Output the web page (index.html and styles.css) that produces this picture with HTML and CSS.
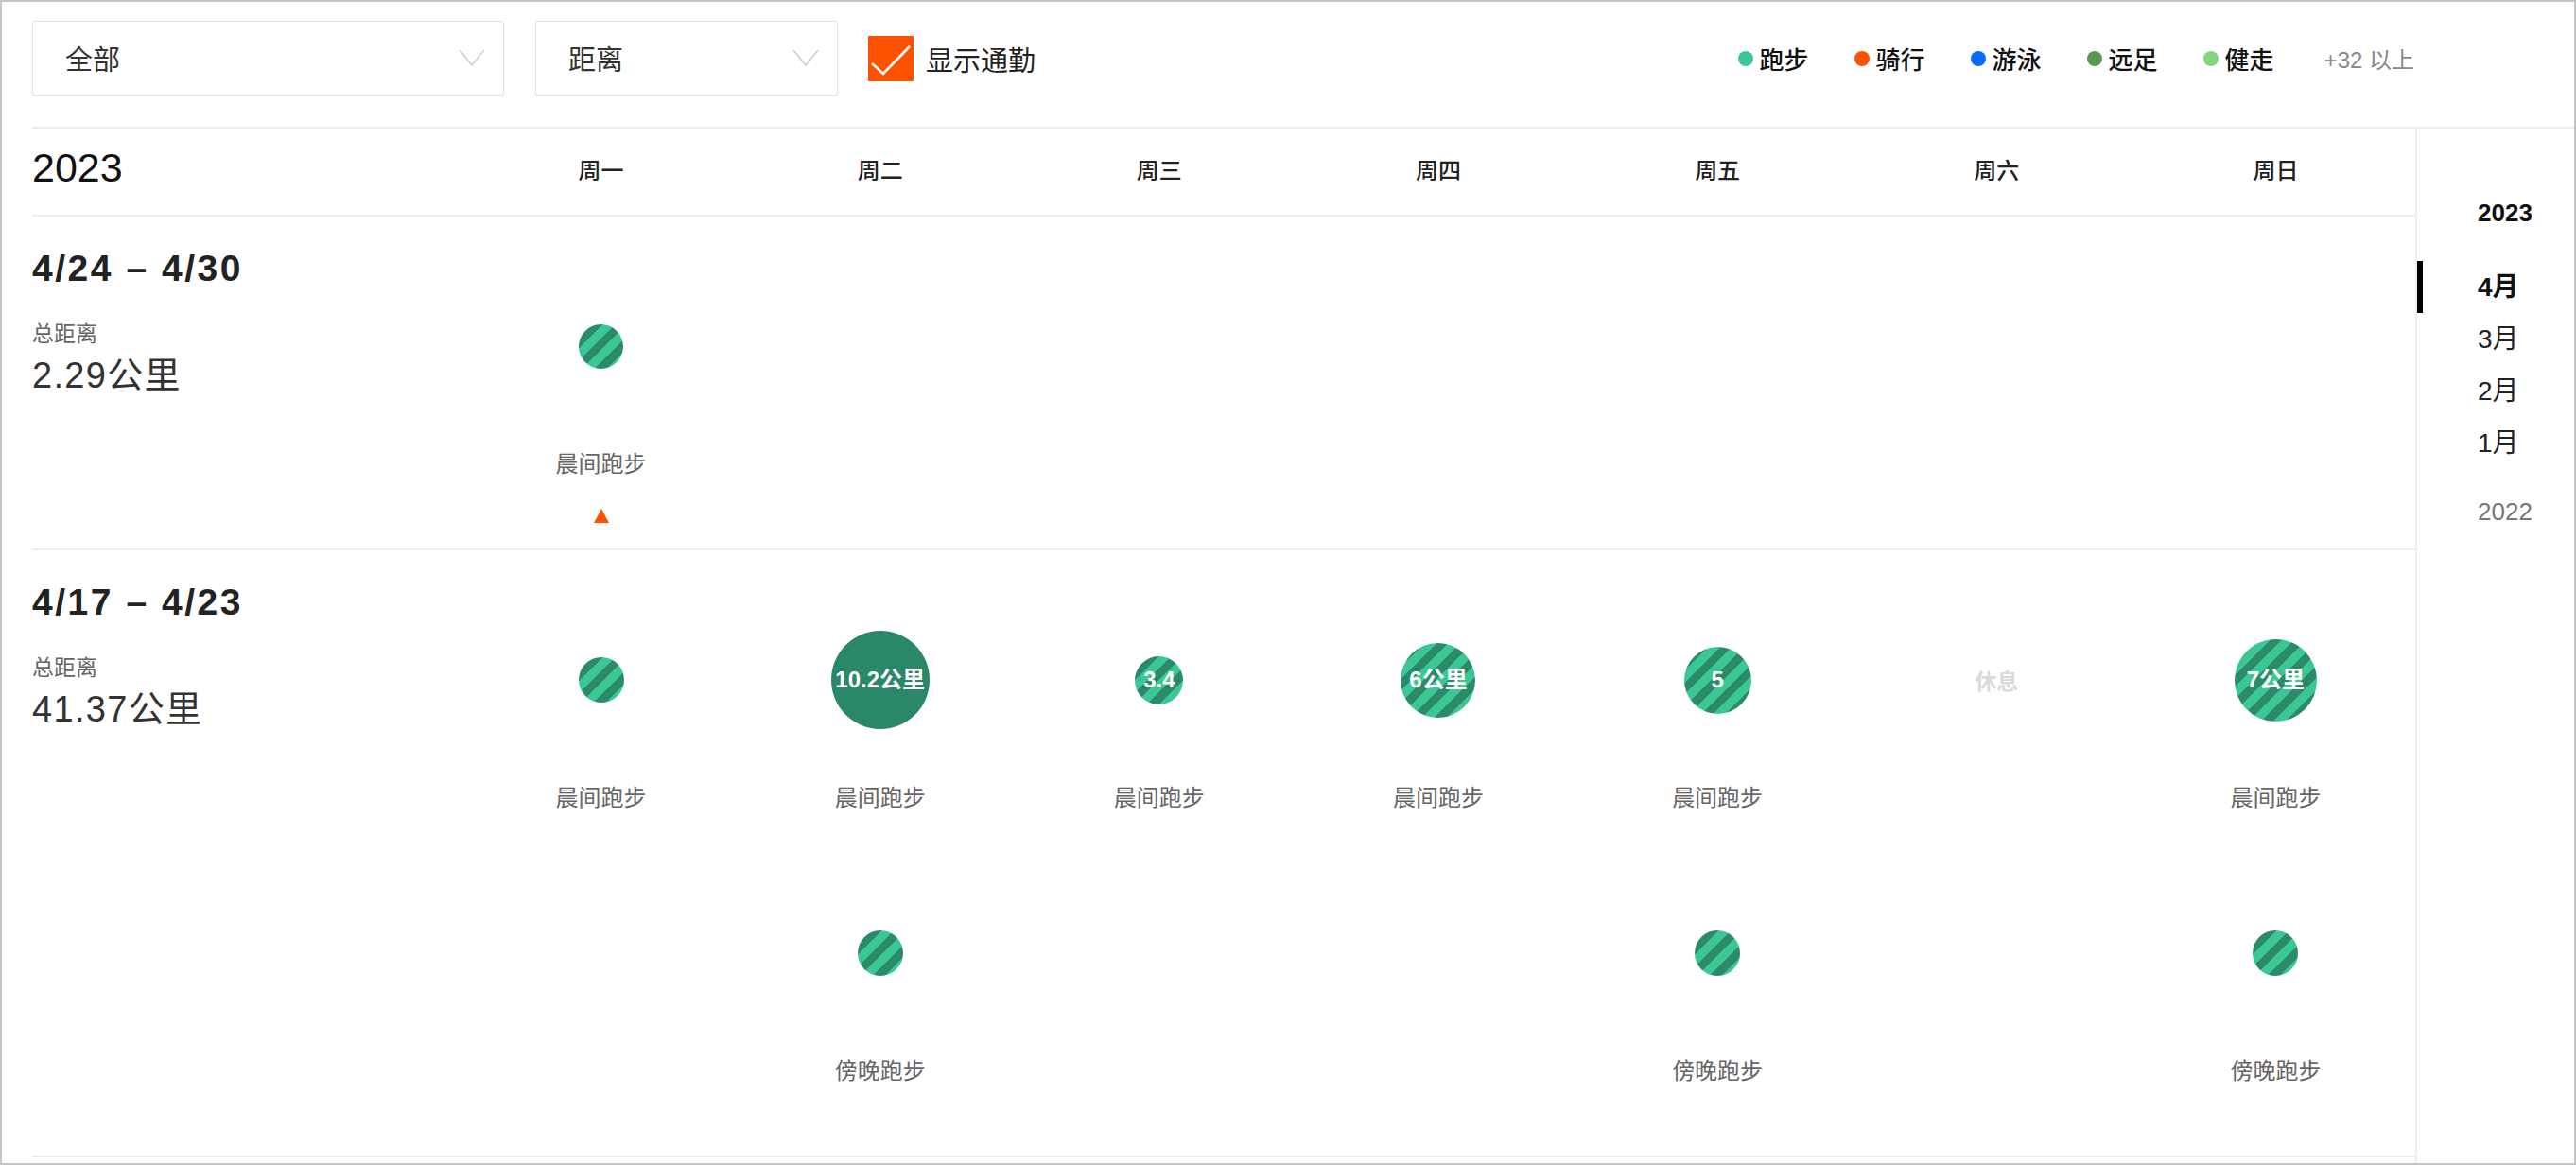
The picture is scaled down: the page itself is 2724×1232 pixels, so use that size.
FILE: index.html
```html
<!DOCTYPE html>
<html lang="zh-CN">
<head>
<meta charset="utf-8">
<title>训练日历</title>
<link rel="stylesheet" href="styles.css">
</head>
<body>
<div class="page">
  <header class="toolbar">
    <div class="select select-type">
      <span class="select-text">全部</span>
      <svg class="chevron" viewBox="0 0 28 18" width="28" height="18"><polyline points="1,1 14,17 27,1" fill="none" stroke="#cfcfcf" stroke-width="1.6"/></svg>
    </div>
    <div class="select select-metric">
      <span class="select-text">距离</span>
      <svg class="chevron" viewBox="0 0 28 18" width="28" height="18"><polyline points="1,1 14,17 27,1" fill="none" stroke="#cfcfcf" stroke-width="1.6"/></svg>
    </div>
    <label class="commute">
      <span class="checkbox"><svg viewBox="0 0 48 48" width="48" height="48"><polyline points="4,29 16,40 44,11" fill="none" stroke="#fff" stroke-width="2.6"/></svg></span>
      <span class="commute-text">显示通勤</span>
    </label>
    <ul class="legend">
      <li class="legend-item"><span class="dot dot-run"></span>跑步</li>
      <li class="legend-item"><span class="dot dot-ride"></span>骑行</li>
      <li class="legend-item"><span class="dot dot-swim"></span>游泳</li>
      <li class="legend-item"><span class="dot dot-hike"></span>远足</li>
      <li class="legend-item"><span class="dot dot-walk"></span>健走</li>
      <li class="legend-more">+32 以上</li>
    </ul>
  </header>

  <div class="main">
    <div class="calendar">
      <div class="cal-row cal-head">
        <div class="head-year">2023</div>
        <div class="head-day">周一</div>
        <div class="head-day">周二</div>
        <div class="head-day">周三</div>
        <div class="head-day">周四</div>
        <div class="head-day">周五</div>
        <div class="head-day">周六</div>
        <div class="head-day">周日</div>
      </div>

      <section class="cal-row week">
        <div class="week-info">
          <div class="week-title">4/24 – 4/30</div>
          <div class="week-label">总距离</div>
          <div class="week-value">2.29公里</div>
        </div>
        <div class="day">
          <div class="act">
            <div class="slot"><span class="bubble striped" style="width:47px;height:47px"></span></div>
            <div class="act-label">晨间跑步</div>
          </div>
          <span class="marker"></span>
        </div>
        <div class="day"></div>
        <div class="day"></div>
        <div class="day"></div>
        <div class="day"></div>
        <div class="day"></div>
        <div class="day"></div>
      </section>

      <section class="cal-row week">
        <div class="week-info">
          <div class="week-title">4/17 – 4/23</div>
          <div class="week-label">总距离</div>
          <div class="week-value">41.37公里</div>
        </div>
        <div class="day">
          <div class="act">
            <div class="slot"><span class="bubble striped" style="width:48px;height:48px"></span></div>
            <div class="act-label">晨间跑步</div>
          </div>
        </div>
        <div class="day">
          <div class="act">
            <div class="slot"><span class="bubble solid" style="width:104px;height:104px">10.2公里</span></div>
            <div class="act-label">晨间跑步</div>
          </div>
          <div class="act">
            <div class="slot"><span class="bubble striped" style="width:48px;height:48px"></span></div>
            <div class="act-label">傍晚跑步</div>
          </div>
        </div>
        <div class="day">
          <div class="act">
            <div class="slot"><span class="bubble striped" style="width:51px;height:51px">3.4</span></div>
            <div class="act-label">晨间跑步</div>
          </div>
        </div>
        <div class="day">
          <div class="act">
            <div class="slot"><span class="bubble striped" style="width:79px;height:79px">6公里</span></div>
            <div class="act-label">晨间跑步</div>
          </div>
        </div>
        <div class="day">
          <div class="act">
            <div class="slot"><span class="bubble striped" style="width:71px;height:71px">5</span></div>
            <div class="act-label">晨间跑步</div>
          </div>
          <div class="act">
            <div class="slot"><span class="bubble striped" style="width:48px;height:48px"></span></div>
            <div class="act-label">傍晚跑步</div>
          </div>
        </div>
        <div class="day">
          <div class="act">
            <div class="slot"><span class="rest">休息</span></div>
          </div>
        </div>
        <div class="day">
          <div class="act">
            <div class="slot"><span class="bubble striped" style="width:87px;height:87px">7公里</span></div>
            <div class="act-label">晨间跑步</div>
          </div>
          <div class="act">
            <div class="slot"><span class="bubble striped" style="width:48px;height:48px"></span></div>
            <div class="act-label">傍晚跑步</div>
          </div>
        </div>
      </section>
    </div>

    <aside class="sidebar">
      <div class="side-year">2023</div>
      <ul class="months">
        <li class="month active">4月</li>
        <li class="month">3月</li>
        <li class="month">2月</li>
        <li class="month">1月</li>
      </ul>
      <div class="side-year-old">2022</div>
    </aside>
  </div>
</div>
</body>
</html>
```

FILE: styles.css
```css
* { box-sizing: border-box; }

html, body {
  margin: 0;
  padding: 0;
  background: #fff;
}

body {
  font-family: "Liberation Sans", "Noto Sans CJK SC", sans-serif;
  color: #222;
}

ul { list-style: none; margin: 0; padding: 0; }

.page {
  width: 2724px;
  height: 1232px;
  border: 2px solid #c4c4c4;
  overflow: hidden;
  background: #fff;
}

/* ---------- toolbar ---------- */
.toolbar {
  display: flex;
  align-items: center;
  height: 79px;
  margin: 20px 0 33px;
  padding: 0 169px 0 32px;
}

.select {
  display: flex;
  align-items: center;
  justify-content: space-between;
  height: 79px;
  padding: 0 19px 2px 34px;
  border: 1px solid #e2e2e2;
  border-radius: 3px;
  box-shadow: 0 1px 2px rgba(0, 0, 0, 0.08);
  background: #fff;
}

.select-type { width: 499px; }
.select-metric { width: 320px; margin-left: 33px; }

.select-text {
  font-size: 29px;
  color: #333;
}

.chevron { display: block; }

.commute {
  display: flex;
  align-items: center;
  margin-left: 32px;
}

.checkbox {
  width: 48px;
  height: 48px;
  background: #fc5200;
  display: block;
}

.checkbox svg { display: block; }

.commute-text {
  margin-left: 13px;
  font-size: 29px;
  font-weight: 400;
  color: #222;
}

.legend {
  display: flex;
  align-items: center;
  margin-left: auto;
}

.legend-item {
  display: flex;
  align-items: center;
  font-size: 26px;
  font-weight: 500;
  color: #111;
  margin-right: 48px;
}

.dot {
  width: 16px;
  height: 16px;
  border-radius: 50%;
  margin-right: 7px;
}

.dot-run { background: #3cc79a; }
.dot-ride { background: #fc5200; }
.dot-swim { background: #0a6cff; }
.dot-hike { background: #5b9950; }
.dot-walk { background: #86d37d; }

.legend-more {
  font-size: 24px;
  color: #888;
  margin-left: 5px;
}

/* ---------- main ---------- */
.main {
  display: flex;
  height: 1096px;
  margin-left: 32px;
  border-top: 2px solid #ededed;
}

.calendar {
  width: 2520px;
  flex: none;
}

.cal-row {
  display: grid;
  grid-template-columns: 454px repeat(7, 1fr);
  border-bottom: 2px solid #eeeeee;
}

.cal-head {
  height: 93px;
  align-items: center;
}

.head-year {
  font-size: 43px;
  color: #111;
  padding-bottom: 8px;
}

.head-day {
  text-align: center;
  font-size: 24px;
  font-weight: 500;
  color: #222;
  padding-bottom: 6px;
}

.week {
  padding-bottom: 62px;
}

.week-info {
  padding-top: 32px;
}

.week-title {
  font-size: 39px;
  line-height: 46px;
  font-weight: 700;
  color: #222;
  letter-spacing: 0.065em;
}

.week-label {
  margin-top: 34px;
  font-size: 23px;
  line-height: 24px;
  color: #666;
}

.week-value {
  margin-top: 10px;
  font-size: 38px;
  line-height: 44px;
  color: #333;
  letter-spacing: 0.035em;
}

.day {
  display: flex;
  flex-direction: column;
  align-items: center;
}

.act {
  height: 289px;
  display: flex;
  flex-direction: column;
  align-items: center;
}

.slot {
  margin-top: 77px;
  height: 120px;
  display: flex;
  align-items: center;
  justify-content: center;
}

.bubble {
  display: flex;
  align-items: center;
  justify-content: center;
  border-radius: 50%;
  color: #fff;
  font-size: 24px;
  font-weight: 700;
  white-space: nowrap;
  line-height: 1;
}

.bubble.solid {
  background: #2a8767;
}

.bubble.striped {
  background: repeating-linear-gradient(135deg, #3bc794 0 9px, #2b8b69 9px 18px);
}

.act-label {
  margin-top: 50px;
  font-size: 24px;
  line-height: 30px;
  color: #666;
}

.rest {
  font-size: 23px;
  font-weight: 700;
  color: #dadada;
}

.marker {
  margin-top: 20px;
  margin-bottom: -35px;
  width: 0;
  height: 0;
  border-left: 8px solid transparent;
  border-right: 8px solid transparent;
  border-bottom: 15px solid #fc5200;
}

/* ---------- sidebar ---------- */
.sidebar {
  flex: 1;
  border-left: 2px solid #efefef;
  padding-top: 71px;
}

.side-year {
  padding-left: 64px;
  font-size: 26px;
  line-height: 36px;
  font-weight: 700;
  color: #111;
}

.months {
  margin-top: 33px;
}

.month {
  height: 55px;
  line-height: 55px;
  padding-left: 64px;
  font-size: 28px;
  color: #222;
}

.month.active {
  font-weight: 700;
  color: #111;
  border-left: 6px solid #000;
  padding-left: 58px;
}

.side-year-old {
  margin-top: 27px;
  padding-left: 64px;
  font-size: 26px;
  line-height: 36px;
  color: #777;
}
```
